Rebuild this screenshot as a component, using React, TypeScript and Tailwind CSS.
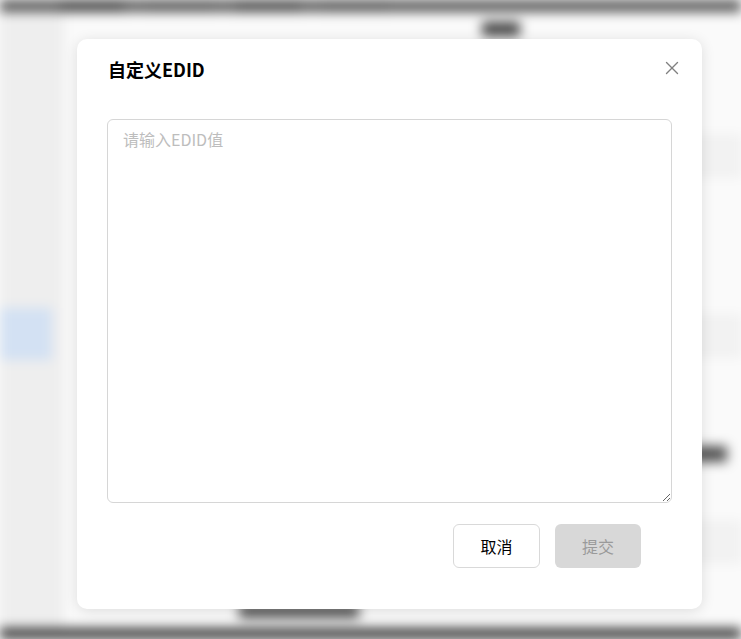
import { X } from "lucide-react";

function BlurredPage() {
  return (
    <div className="absolute inset-0 overflow-hidden bg-[#fafafa] blur-[6px]">
      <div className="flex flex-col h-full">
        <div className="h-[12px] bg-[#5a5a5a] flex gap-6 px-[60px]">
          <div className="h-full w-16 bg-[#444]" />
          <div className="h-full w-16 bg-[#555]" />
          <div className="h-full w-16 bg-[#4a4a4a]" />
          <div className="h-full w-16 bg-[#555]" />
        </div>
        <div className="flex flex-1">
          <div className="w-[64px] bg-[#f3f3f3] flex flex-col pt-[296px]">
            <div className="h-[52px] w-[52px] bg-[#d8e6f8]" />
          </div>
          <div className="flex-1 bg-white flex flex-col">
            <div className="h-[34px] flex items-center pl-[418px]">
              <div className="h-[14px] w-[38px] bg-[#444]" />
            </div>
            <div className="flex-1 flex">
              <div className="flex-1" />
              <div className="w-[50px] flex flex-col gap-[60px] pt-[90px]">
                <div className="h-[40px] border border-[#e5e5e5] bg-[#f7f7f7]" />
                <div className="h-[40px] border border-[#e5e5e5] bg-[#f7f7f7] mt-[80px]" />
                <div className="h-[16px] w-[36px] bg-[#555] mt-[30px]" />
                <div className="h-[40px] border border-[#e5e5e5] bg-[#f7f7f7]" />
              </div>
            </div>
            <div className="h-[24px] pl-[175px]">
              <div className="h-[14px] w-[120px] bg-[#555]" />
            </div>
          </div>
        </div>
        <div className="h-[11px] bg-[#3a3a3a]" />
      </div>
    </div>
  );
}

export default function App() {
  return (
    <div
      className="relative w-[741px] h-[639px] overflow-hidden"
      style={{ fontFamily: '"Noto Sans CJK SC", "Noto Sans", sans-serif' }}
    >
      <BlurredPage />
      <div className="absolute inset-0 bg-black/[0.02]" />
      <div className="absolute left-[77px] top-[39px] w-[625px] h-[570px] bg-white rounded-[10px] shadow-[0_2px_14px_rgba(0,0,0,0.12)] px-[30px] flex flex-col">
        <div className="flex items-start justify-between pt-[17px]">
          <h2 className="text-[18px] font-bold text-black leading-[26px] pl-[1px]">自定义EDID</h2>
          <button className="text-[#808080] mt-[1px] -mr-[11px]">
            <X size={22} strokeWidth={1.5} />
          </button>
        </div>
        <textarea
          placeholder="请输入EDID值"
          className="mt-[37px] w-full h-[384px] border border-[#d6d6d6] rounded-[6px] px-[15px] py-[6px] text-[16px] leading-[26px] text-[#333] placeholder:text-[#bdbdbd] outline-none resize-y"
        />
        <div className="flex justify-end gap-[15px] mt-[21px] pr-[31px]">
          <button className="w-[87px] h-[44px] border border-[#d9d9d9] rounded-[6px] bg-white text-[16px] text-black">
            取消
          </button>
          <button className="w-[86px] h-[44px] rounded-[6px] bg-[#d8d8d8] text-[16px] text-[#9a9a9a]">
            提交
          </button>
        </div>
      </div>
    </div>
  );
}
